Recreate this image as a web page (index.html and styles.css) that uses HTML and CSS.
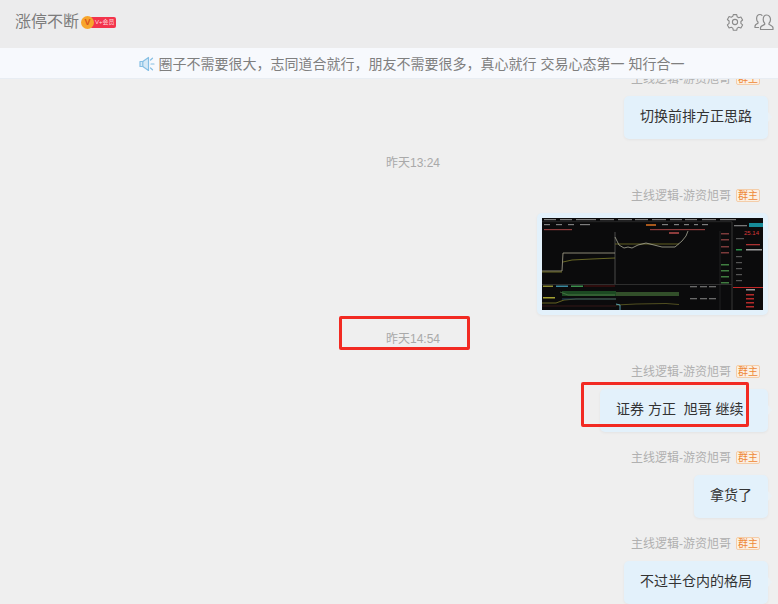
FILE: index.html
```html
<!DOCTYPE html>
<html lang="zh-CN">
<head>
<meta charset="utf-8">
<title>涨停不断</title>
<link rel="stylesheet" href="styles.css">
</head>
<body>
<div class="page">
  <header class="header">
    <div class="title-group">
      <span class="title">涨停不断</span>
      <span class="vip">
        <span class="vip-pill">V+会员</span>
        <span class="vip-coin">V</span>
      </span>
    </div>
    <div class="tools">
      <svg class="icon-gear" viewBox="0 0 18 18" width="18" height="18" fill="none" stroke="#8a8a8a" stroke-width="1.1" stroke-linejoin="round">
        <path d="M7.3 1.6h3.4l.5 2.2 1.5.9 2.2-.7 1.7 3-1.7 1.5v1.9l1.7 1.5-1.7 3-2.2-.7-1.5.9-.5 2.2H7.3l-.5-2.2-1.5-.9-2.2.7-1.7-3 1.7-1.5V8l-1.7-1.5 1.7-3 2.2.7 1.5-.9z"/>
        <circle cx="9" cy="9" r="2.6"/>
      </svg>
      <svg class="icon-users" viewBox="0 0 20 18" width="20" height="18" fill="none" stroke="#8a8a8a" stroke-width="1.2" stroke-linecap="round" stroke-linejoin="round">
        <path d="M6.5 16.5H19v-1.7c0-1.7-2.7-2.8-4-3.4v-1.2c1-.8 1.5-2 1.5-3.6 0-2.700-1.600-4.600-3.700-4.600S9.200 3.900 9.200 6.600c0 1.600.5 2.800 1.500 3.600v1.200c-1.300.6-4.200 1.700-4.200 3.400z"/>
        <path d="M8 2.400C7.500 1.800 6.800 1.500 6 1.500c-2 0-3.400 1.800-3.400 4.200 0 1.500.5 2.600 1.400 3.300v1.200c-1.200.5-3 1.500-3 3v1.300h3.500"/>
      </svg>
    </div>
  </header>

  <div class="notice">
    <svg class="icon-speaker" viewBox="0 0 16 16" width="16" height="16" fill="#d6e9f6" stroke="#86bfe4" stroke-width="1.2" stroke-linejoin="round" stroke-linecap="round">
      <path d="M1 5.500h2.800L9.500 1.500v13L3.800 10.500H1z"/>
      <path d="M3.800 5.500v5" fill="none"/>
      <path d="M12 8h3M11.500 4l2-1.800M11.500 12l2 1.800" fill="none"/>
    </svg>
    <span class="notice-text">圈子不需要很大，志同道合就行，朋友不需要很多，真心就行 交易心态第一 知行合一</span>
  </div>

  <main class="chat">
    <div class="list">
      <section class="msg">
        <div class="author"><span class="name">主线逻辑-游资旭哥</span><span class="tag">群主</span></div>
        <div class="bubble">切换前排方正思路</div>
      </section>

      <div class="time">昨天13:24</div>

      <section class="msg">
        <div class="author"><span class="name">主线逻辑-游资旭哥</span><span class="tag">群主</span></div>
        <div class="bubble bubble-image">
          <svg class="chart" viewBox="0 0 221 92" width="221" height="92">
            <defs><filter id="soft"><feGaussianBlur stdDeviation="0.45"/></filter></defs>
            <rect width="221" height="92" fill="#0b0b0c"/>
            <g filter="url(#soft)">
              <g fill="#7d7d7d">
                <rect x="2" y="1" width="12" height="1.200"/><rect x="18" y="1" width="12" height="1.200"/><rect x="34" y="1" width="20" height="1.200"/><rect x="58" y="1" width="14" height="1.200"/><rect x="76" y="1" width="14" height="1.200"/><rect x="93" y="1" width="13" height="1.200"/><rect x="110" y="1" width="14" height="1.200"/><rect x="128" y="1" width="12" height="1.200"/><rect x="143" y="1" width="12" height="1.200"/><rect x="160" y="1" width="14" height="1.200"/><rect x="178" y="1" width="16" height="1.200"/>
                <rect x="2" y="6" width="6" height="1.200"/><rect x="14" y="6" width="6" height="1.200"/><rect x="26" y="6" width="6" height="1.200"/><rect x="38" y="6" width="10" height="1.200"/><rect x="120" y="6" width="6" height="1.200"/><rect x="132" y="6" width="5" height="1.200"/><rect x="142" y="6" width="5" height="1.200"/><rect x="152" y="6" width="4" height="1.200"/><rect x="160" y="6" width="6" height="1.200"/>
              </g>
              <rect x="0" y="3.500" width="190" height=".6" fill="#3a3a3a"/>
              <rect x="2" y="11" width="28" height="1.200" fill="#8c3a3a"/>
              <rect x="104" y="6" width="10" height="2" fill="#a8591c"/>
              <rect x="108" y="11" width="55" height="1.200" fill="#8c3a3a"/>
              <rect x="127" y="14" width="10" height="2" fill="#8c3a3a"/>
              <path d="M178 13v79" stroke="#333" stroke-width=".6"/>
              <path d="M190 4v88" stroke="#4a4a4a" stroke-width=".7"/>
              <path d="M73 14v52" stroke="#666" stroke-width=".7"/>
              <path d="M0 53h20l1-18h52" fill="none" stroke="#a9a68f" stroke-width=".8"/>
              <path d="M0 54h20M21 44l9-2 20-1 23-1" fill="none" stroke="#7f7d2c" stroke-width=".8"/>
              <path d="M73 26h64" fill="none" stroke="#77752c" stroke-width=".8"/>
              <path d="M73 19l4 8 5 3 4-1 4 1 6-3 8-2 8 2 8 2 7 0 6 0 7-6 4-5 2-5" fill="none" stroke="#a8a896" stroke-width=".8"/>
              <g fill="#7b3a3a">
                <rect x="179" y="15" width="8" height="1.500"/><rect x="179" y="21" width="8" height="1.500"/><rect x="179" y="28" width="8" height="1.500"/><rect x="179" y="34" width="8" height="1.500"/>
              </g>
              <g fill="#3f7d3f">
                <rect x="179" y="46" width="8" height="1.500"/><rect x="179" y="52" width="8" height="1.500"/><rect x="179" y="58" width="8" height="1.500"/><rect x="179" y="64" width="8" height="1.500"/>
              </g>
              <rect x="0" y="66" width="190" height=".6" fill="#444"/>
              <rect x="1" y="67.500" width="10" height="1.500" fill="#8c8c36"/>
              <rect x="14" y="67.500" width="12" height="1.500" fill="#3a8aa0"/>
              <rect x="29" y="67.500" width="12" height="1.500" fill="#3d8f4e"/>
              <rect x="42" y="67" width="31" height="2" fill="#2e0f10"/>
              <rect x="20" y="73" width="54" height="5" fill="#1e4a24"/>
              <rect x="74" y="74" width="63" height="4" fill="#33502b"/>
              <path d="M18 74l8 3h47" fill="none" stroke="#5d8d52" stroke-width=".6"/>
              <rect x="1" y="79" width="12" height="1.500" fill="#a3a030"/>
              <path d="M0 85h14l8-3 12-1h40" fill="none" stroke="#8d8a2a" stroke-width=".7"/>
              <path d="M20 81h54" stroke="#22496b" stroke-width=".9"/>
              <path d="M74 87l20-1 30-.5 13 1" fill="none" stroke="#6e6c2a" stroke-width=".7"/>
              <path d="M74 86l4 1v5" fill="none" stroke="#5fb7cf" stroke-width=".8"/>
              <path d="M0 88h74" stroke="#5c1c1c" stroke-width=".5"/>
              <g fill="#6a6a6a">
                <rect x="148" y="68" width="7" height="1.300"/><rect x="158" y="68" width="7" height="1.300"/><rect x="167" y="68" width="7" height="1.300"/>
                <rect x="148" y="80" width="7" height="1.300"/><rect x="158" y="80" width="7" height="1.300"/><rect x="167" y="80" width="7" height="1.300"/>
              </g>
              <rect x="192" y="7" width="13" height="1.300" fill="#777"/>
              <rect x="207" y="5" width="14" height="4" fill="#168b99"/>
              <g fill="#555">
                <rect x="194" y="20" width="8" height="1.200"/><rect x="194" y="38" width="6" height="1.200"/><rect x="194" y="44" width="6" height="1.200"/><rect x="194" y="50" width="6" height="1.200"/><rect x="194" y="56" width="6" height="1.200"/><rect x="194" y="62" width="6" height="1.200"/>
              </g>
              <rect x="204" y="26" width="14" height="1.300" fill="#a33"/>
              <rect x="204" y="31" width="16" height="1.500" fill="#9a9a9a"/>
              <rect x="194" y="31" width="6" height="1.500" fill="#2f8f4a"/>
              <rect x="191" y="69" width="30" height="1" fill="#c02626"/>
              <rect x="204" y="71" width="9" height="1.500" fill="#999"/>
              <g fill="#b52a2a">
                <rect x="204" y="76" width="8" height="1.500"/><rect x="204" y="80" width="8" height="1.500"/><rect x="204" y="84" width="8" height="1.500"/><rect x="204" y="88" width="8" height="1.500"/>
              </g>
            </g>
            <text class="chart-price" x="202" y="17">25.14</text>
          </svg>
        </div>
      </section>

      <div class="time">昨天14:54</div>

      <section class="msg">
        <div class="author"><span class="name">主线逻辑-游资旭哥</span><span class="tag">群主</span></div>
        <div class="bubble bubble-pre">证券 方正  旭哥 继续  </div>
      </section>

      <section class="msg">
        <div class="author"><span class="name">主线逻辑-游资旭哥</span><span class="tag">群主</span></div>
        <div class="bubble">拿货了</div>
      </section>

      <section class="msg">
        <div class="author"><span class="name">主线逻辑-游资旭哥</span><span class="tag">群主</span></div>
        <div class="bubble">不过半仓内的格局</div>
      </section>
    </div>
  </main>

  <div class="mark mark-time"></div>
  <div class="mark mark-text"></div>
</div>
</body>
</html>
```

FILE: styles.css
```css
* {
  box-sizing: border-box;
}

html,
body {
  margin: 0;
  padding: 0;
}

body {
  font-family: "Liberation Sans", "Noto Sans CJK SC", sans-serif;
  background: #efefef;
}

.page {
  position: relative;
  display: flex;
  flex-direction: column;
  width: 778px;
  height: 604px;
  overflow: hidden;
  background: #efefef;
}

.header {
  display: flex;
  flex: none;
  align-items: center;
  justify-content: space-between;
  height: 48px;
  padding: 0 4px 4px 15px;
  background: #ececed;
}

.title-group {
  display: flex;
  align-items: center;
}

.title {
  font-size: 16px;
  line-height: 22px;
  color: #7c7c7c;
}

.vip {
  position: relative;
  display: block;
  width: 36px;
  height: 13px;
  margin-left: 2px;
}

.vip-coin {
  position: absolute;
  top: 0;
  left: 0;
  width: 13px;
  height: 13px;
  border-radius: 50%;
  background: #f7a52c;
  font-size: 9px;
  font-weight: 700;
  line-height: 13px;
  text-align: center;
  color: #d9541e;
}

.vip-pill {
  position: absolute;
  top: 1px;
  left: 9px;
  width: 26px;
  height: 11px;
  padding-left: 5px;
  border-radius: 2px;
  background: #f3344c;
  font-size: 6px;
  line-height: 11px;
  white-space: nowrap;
  color: #ffd9dc;
}

.tools {
  display: flex;
  align-items: center;
  gap: 10px;
}

.icon-gear {
  display: block;
}

.icon-users {
  display: block;
}

.notice {
  position: relative;
  z-index: 2;
  display: flex;
  flex: none;
  align-items: center;
  justify-content: center;
  gap: 4px;
  height: 31px;
  padding-top: 1px;
  padding-left: 45px;
  border-bottom: 1px solid #e8edf3;
  background: #f7f9fd;
}

.icon-speaker {
  display: block;
  flex: none;
}

.notice-text {
  font-size: 14px;
  line-height: 20px;
  white-space: nowrap;
  color: #7f7f7f;
}

.chat {
  flex: 1;
  min-height: 0;
  overflow: hidden;
}

.list {
  display: flex;
  flex-direction: column;
  margin-top: -9px;
  padding-right: 10px;
}

.msg {
  display: flex;
  flex-direction: column;
  align-items: flex-end;
  margin-bottom: 17px;
}

.author {
  display: flex;
  align-items: center;
  justify-content: flex-end;
  gap: 5px;
  height: 18px;
  margin-bottom: 8px;
  padding-right: 8px;
}

.name {
  font-size: 12px;
  line-height: 18px;
  white-space: nowrap;
  color: #b0b0b0;
}

.tag {
  width: 24px;
  height: 13px;
  margin-bottom: 2px;
  border: 1px solid #f4cda9;
  border-radius: 2px;
  background: #fbf0e4;
  font-size: 10px;
  line-height: 11px;
  text-align: center;
  color: #ee8836;
}

.bubble {
  position: relative;
  height: 43px;
  padding: 9px 16px;
  border-radius: 5px;
  background: #e3f1fb;
  box-shadow: 0 1px 3px rgba(0, 0, 0, 0.05);
  font-size: 14px;
  line-height: 22px;
  white-space: nowrap;
  color: #333;
}

.bubble::after {
  content: "";
  position: absolute;
  top: 16px;
  left: 100%;
  border-top: 5px solid transparent;
  border-bottom: 5px solid transparent;
  border-left: 4px solid #ebf1f5;
}

.bubble-pre {
  width: 168px;
  white-space: pre;
}

.bubble-image {
  height: 102px;
  padding: 5px;
  line-height: 0;
}

.chart {
  display: block;
}

.chart-price {
  font-family: "Liberation Sans", sans-serif;
  font-size: 6px;
  fill: #d63a3a;
}

.time {
  height: 14px;
  margin-bottom: 17px;
  padding-left: 58px;
  font-size: 12px;
  line-height: 14px;
  text-align: center;
  color: #a9a9a9;
}

.mark {
  position: absolute;
  z-index: 3;
  border: 3px solid #f22a22;
  border-radius: 2px;
}

.mark-time {
  top: 316px;
  left: 339px;
  width: 131px;
  height: 34px;
}

.mark-text {
  top: 382px;
  left: 581px;
  width: 168px;
  height: 45px;
}
```
